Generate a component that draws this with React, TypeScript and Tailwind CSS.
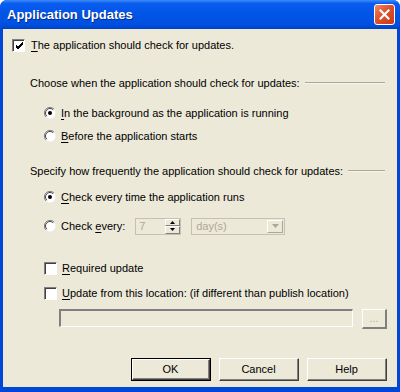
import React from 'react';

const font = "font-['Liberation_Sans',Arial,sans-serif] text-[11px] text-black";

const U: React.FC<{ children: React.ReactNode }> = ({ children }) => <span className="underline underline-offset-[2px]">{children}</span>;

const CheckBox: React.FC<{ checked?: boolean }> = ({ checked }) => (
    <div className="w-[13px] h-[13px] shrink-0 border-t border-l border-[#808080] border-r border-b border-r-white border-b-white bg-white">
        <div className="w-full h-full border-t border-l border-[#404040] border-r-0 border-b-0 flex items-center justify-center">
            {checked && (
                <svg width="9" height="9" viewBox="0 0 9 9">
                    <path d="M1 4 L3 6 L8 1 M1 5 L3 7 L8 2 M1 6 L3 8 L8 3" stroke="#000" strokeWidth="1" fill="none" />
                </svg>
            )}
        </div>
    </div>
);

const Radio: React.FC<{ checked?: boolean }> = ({ checked }) => (
    <svg width="12" height="12" viewBox="0 0 12 12" className="shrink-0">
        <circle cx="6" cy="6" r="5.5" fill="#fff" />
        <path d="M10 2 A5.5 5.5 0 0 0 2 10" stroke="#808080" strokeWidth="1" fill="none" />
        <path d="M9.2 2.8 A4.5 4.5 0 0 0 2.8 9.2" stroke="#404040" strokeWidth="1" fill="none" />
        {checked && <circle cx="6" cy="6" r="2" fill="#000" />}
    </svg>
);

const Legend: React.FC<{ children: React.ReactNode }> = ({ children }) => (
    <div className="flex items-center h-[16px] pl-[27px] pr-[12px]">
        <span className="whitespace-nowrap">{children}</span>
        <div className="flex-1 ml-[5px] flex flex-col">
            <div className="h-px bg-[#aca899]" />
            <div className="h-px bg-[#f4f3ee]" />
        </div>
    </div>
);

const Button: React.FC<{ label: string; primary?: boolean }> = ({ label, primary }) => (
    <div className={`w-[80px] h-[23px] ${primary ? 'border border-black' : ''}`}>
        <div className="w-full h-full border-t border-l border-white border-r border-b border-r-[#404040] border-b-[#404040] bg-[#ece9d8]">
            <div className="w-full h-full border-r border-b border-[#808080] border-t-0 border-l-0 flex items-center justify-center">
                {label}
            </div>
        </div>
    </div>
);

const App: React.FC = () => {
    return (
        <div className={`w-[400px] h-[392px] flex flex-col rounded-t-[7px] bg-[#0047d8] ${font}`}>
            <div className="h-[29px] shrink-0 flex items-center justify-between pl-[7px] pr-[5px] rounded-t-[7px] bg-[linear-gradient(to_bottom,#3d8cf7_0%,#0a5cf0_12%,#0055e5_50%,#0050e0_85%,#0040c8_100%)]">
                <span className="text-white font-bold text-[13px] [text-shadow:1px_1px_0_#0a2a8a]">Application Updates</span>
                <div className="w-[21px] h-[21px] rounded-[3px] border border-white bg-[linear-gradient(135deg,#f08a6a,#e0502a_45%,#c83c18)] flex items-center justify-center">
                    <svg width="11" height="11" viewBox="0 0 11 11">
                        <path d="M1.5 1.5 L9.5 9.5 M9.5 1.5 L1.5 9.5" stroke="#fff" strokeWidth="2.2" strokeLinecap="square" />
                    </svg>
                </div>
            </div>

            <div className="flex-1 mx-[3px] mb-[5px] bg-[#ece9d8] flex flex-col pt-[8px]">
                <div className="flex items-center h-[16px] pl-[9px]">
                    <CheckBox checked />
                    <span className="ml-[6px]"><U>T</U>he application should check for updates.</span>
                </div>

                <div className="mt-[22px]">
                    <Legend>Choose when the application should check for updates:</Legend>
                </div>

                <div className="flex items-center h-[16px] pl-[41px] mt-[14px]">
                    <Radio checked />
                    <span className="ml-[5px]"><U>I</U>n the background as the application is running</span>
                </div>
                <div className="flex items-center h-[16px] pl-[41px] mt-[7px]">
                    <Radio />
                    <span className="ml-[5px]"><U>B</U>efore the application starts</span>
                </div>

                <div className="mt-[19px]">
                    <Legend>Specify how frequently the application should check for updates:</Legend>
                </div>

                <div className="flex items-center h-[16px] pl-[41px] mt-[10px]">
                    <Radio checked />
                    <span className="ml-[5px]"><U>C</U>heck every time the application runs</span>
                </div>
                <div className="flex items-center h-[18px] pl-[41px] mt-[12px]">
                    <Radio />
                    <span className="ml-[5px]">Check <U>e</U>very:</span>
                    <div className="ml-[10px] w-[46px] h-[17px] flex border border-[#c5c2b2]">
                        <div className="flex-1 pl-[3px] text-[#aca899] leading-[15px]">7</div>
                        <div className="w-[15px] flex flex-col">
                            <div className="flex-1 border border-t-white border-l-white border-r-[#808080] border-b-[#808080] flex items-center justify-center">
                                <svg width="5" height="3" viewBox="0 0 5 3"><path d="M2.5 0 L5 3 L0 3 Z" fill="#000" /></svg>
                            </div>
                            <div className="flex-1 border border-t-white border-l-white border-r-[#808080] border-b-[#808080] flex items-center justify-center">
                                <svg width="5" height="3" viewBox="0 0 5 3"><path d="M0 0 L5 0 L2.5 3 Z" fill="#000" /></svg>
                            </div>
                        </div>
                    </div>
                    <div className="ml-[10px] w-[94px] h-[17px] flex border border-[#c5c2b2] p-px">
                        <div className="flex-1 pl-[3px] text-[#aca899] leading-[13px]">day(s)</div>
                        <div className="w-[16px] border border-t-white border-l-white border-r-[#aca899] border-b-[#aca899] flex items-center justify-center">
                            <svg width="7" height="4" viewBox="0 0 7 4"><path d="M0 0 L7 0 L3.5 4 Z" fill="#aca899" /></svg>
                        </div>
                    </div>
                </div>

                <div className="flex items-center h-[16px] pl-[41px] mt-[25px]">
                    <CheckBox />
                    <span className="ml-[5px]"><U>R</U>equired update</span>
                </div>
                <div className="flex items-center h-[16px] pl-[41px] mt-[9px]">
                    <CheckBox />
                    <span className="ml-[5px]"><U>U</U>pdate from this location: (if different than publish location)</span>
                </div>

                <div className="flex items-start pl-[56px] pr-[10px] mt-[8px]">
                    <div className="w-[295px] h-[18px] border-t-2 border-l-2 border-[#808080] border-r border-b border-r-white border-b-white" />
                    <div className="ml-[9px] w-[25px] h-[20px] border-t border-l border-white border-r-2 border-b-2 border-r-[#808080] border-b-[#808080] flex items-end justify-center pb-[3px] text-[#aca899] leading-none">
                        ...
                    </div>
                </div>

                <div className="flex justify-end gap-[8px] pr-[10px] mt-[29px]">
                    <Button label="OK" primary />
                    <Button label="Cancel" />
                    <Button label="Help" />
                </div>
            </div>
        </div>
    );
};

export default App;
